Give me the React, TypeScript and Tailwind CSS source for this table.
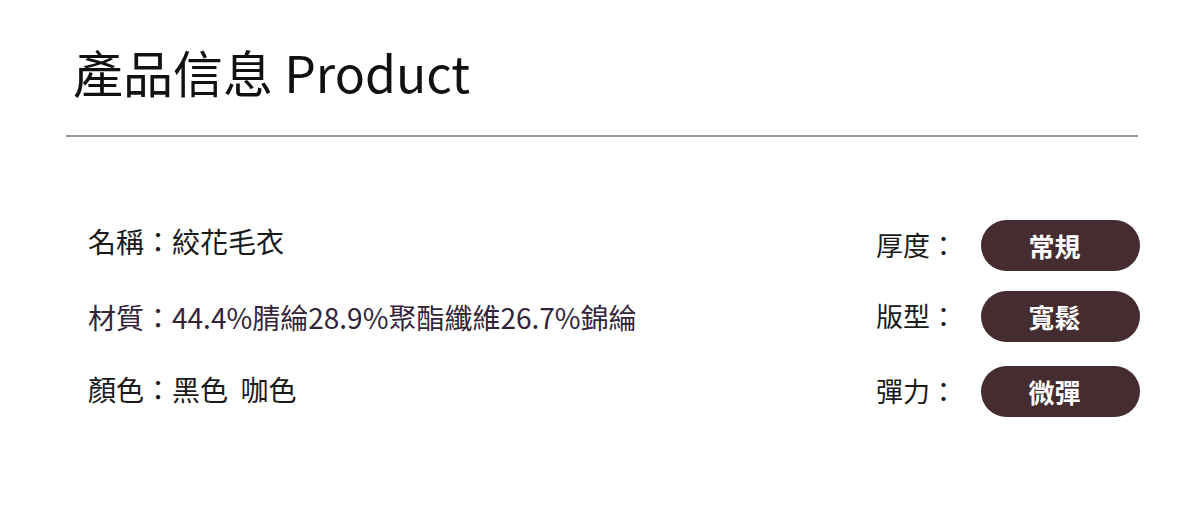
import React from 'react';

const leftRows = [
  { label: '名稱', value: '絞花毛衣', color: 'text-[#1a1a1a]', gap: 'mt-0' },
  { label: '材質', value: '44.4%腈綸28.9%聚酯纖維26.7%錦綸', color: 'text-[#33243a]', gap: 'mt-[42px]' },
  { label: '顏色', value: '黑色\u00a0\u00a0咖色', color: 'text-[#1a1a1a]', gap: 'mt-[38px]' },
];

const rightRows = [
  { label: '厚度', value: '常規', gap: 'mt-0' },
  { label: '版型', value: '寬鬆', gap: 'mt-[20px]' },
  { label: '彈力', value: '微彈', gap: 'mt-[24px]' },
];

const font = { fontFamily: '"Noto Sans CJK TC", "Noto Sans", sans-serif' };

export default function App() {
  return (
    <div className="w-[1200px] h-[525px] bg-white overflow-hidden [text-spacing-trim:space-all]" style={font}>
      <div className="pl-[73px] pt-[40px]">
        <h1 className="text-[50px] leading-[62px] text-[#111] font-normal">產品信息 Product</h1>
      </div>
      <div className="ml-[66px] mr-[62px] mt-[33px] h-[2px] bg-[#9a9a9a]" />

      <div className="flex justify-between pl-[88px] pr-[60px] mt-[82px]">
        <div className="flex flex-col pt-[5px]">
          {leftRows.map((r) => (
            <div key={r.label} className={`text-[28px] leading-[34px] ${r.color} ${r.gap}`}>
              {r.label}：{r.value}
            </div>
          ))}
        </div>
        <div className="flex flex-col pt-[1px]">
          {rightRows.map((r) => (
            <div key={r.label} className={`flex items-center ${r.gap}`}>
              <span className="w-[105px] text-[27px] text-[#1a1a1a]">{r.label}：</span>
              <span className="w-[159px] h-[51px] pr-[12px] rounded-full bg-[#442c30] text-white text-[26px] font-bold flex items-center justify-center">
                {r.value}
              </span>
            </div>
          ))}
        </div>
      </div>
    </div>
  );
}
